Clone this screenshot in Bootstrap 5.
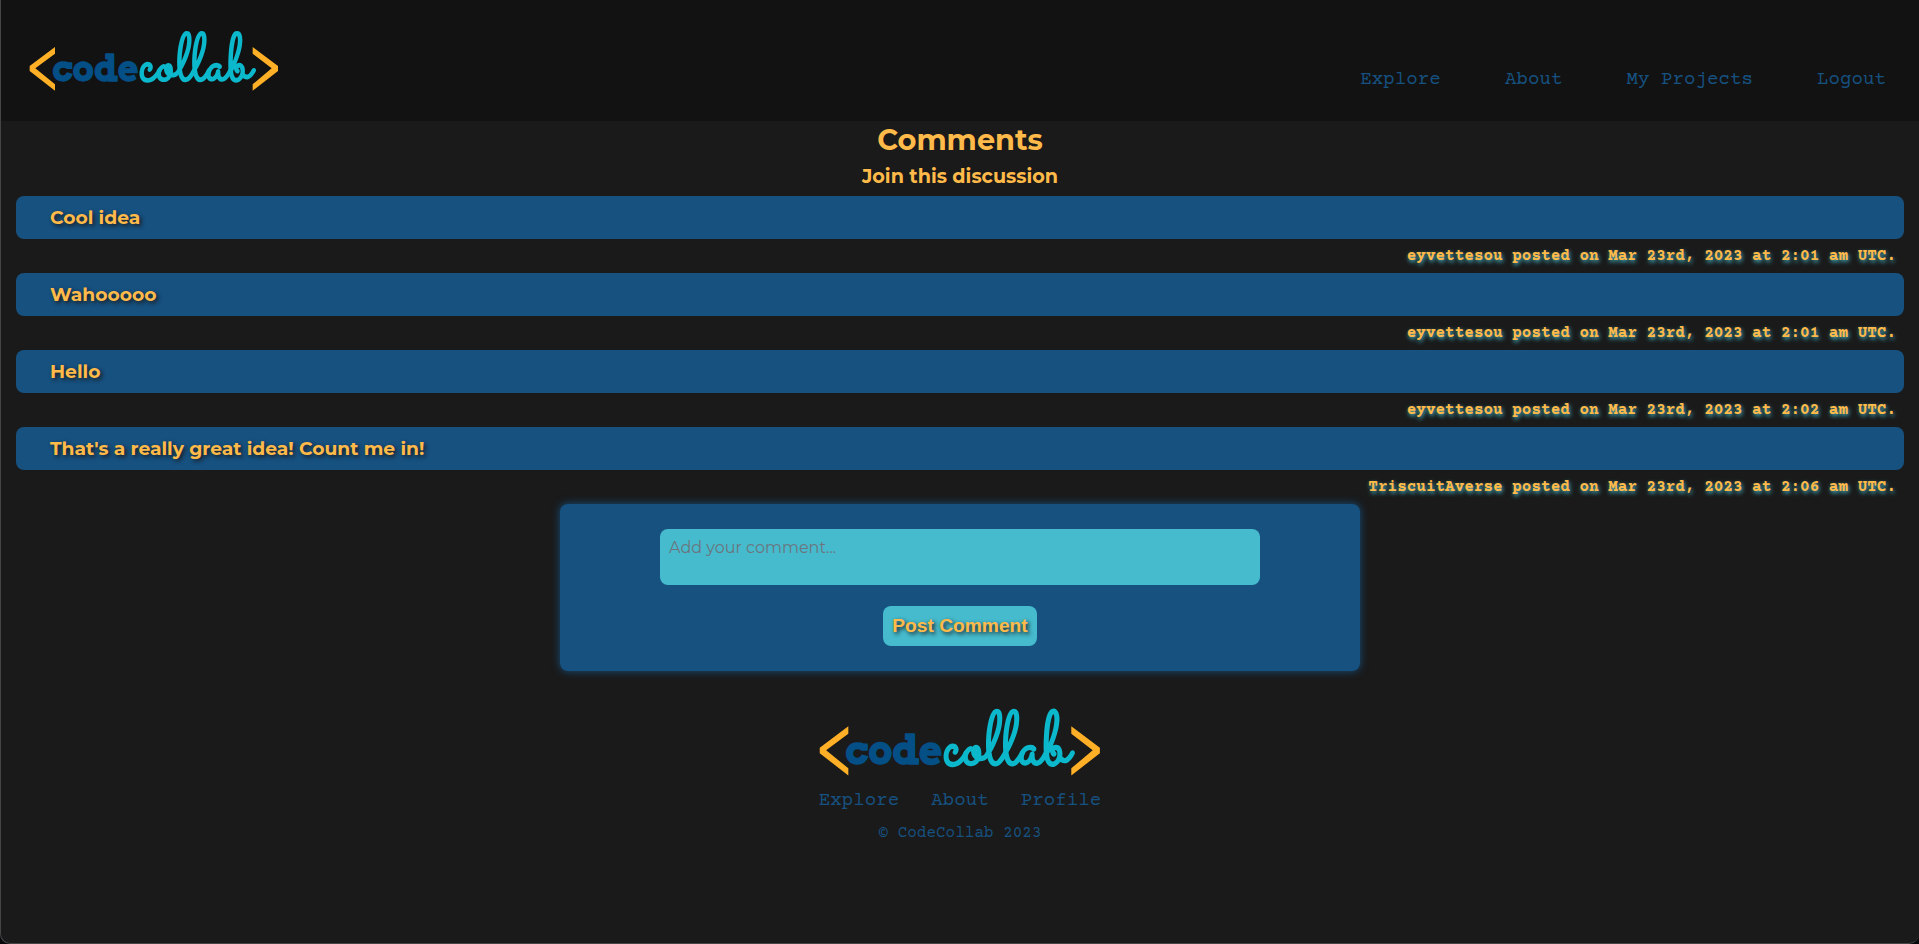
<!DOCTYPE html>
<html lang="en">
<head>
<meta charset="utf-8">
<meta name="viewport" content="width=device-width, initial-scale=1">
<title>CodeCollab</title>
<link href="https://cdn.jsdelivr.net/npm/bootstrap@5.3.0/dist/css/bootstrap.min.css" rel="stylesheet">
<style>
:root { --cc-blue:#165180; --cc-teal:#45bbcd; --cc-gold:#ffba49; --cc-dark:#1a1a1a; --cc-mono:"Courier Prime","Liberation Mono",monospace; }
html { background:#08090a; }
body { background:transparent; font-family:Montserrat,Inter,sans-serif; color:var(--cc-gold); }
.page-frame { height:944px; background:var(--cc-dark); border:solid #454545; border-width:0 0 1px 1px; border-radius:0 0 10px 10px; overflow:hidden; }
.site-head { height:121px; background:#121212; padding:30px 33px 0 28px; }
.site-link { font:19.2px/22px var(--cc-mono); color:var(--cc-blue); text-decoration:none; }
.head-links { gap:64px; padding-top:39px; }
.title-main { font-size:28.8px; font-weight:700; line-height:37px; }
.title-sub { font-size:19.2px; font-weight:700; line-height:24px; margin-top:6px; }
.comment-list { margin:8px 15px 0; }
.comment-bar { height:43px; background:var(--cc-blue); border-radius:8px; padding-left:34px; font-size:18.72px; font-weight:700; line-height:43px; text-shadow:2px 2px 4px #1a1a1a; }
.comment-meta { height:34px; padding-right:8px; font:bold 16px/35px var(--cc-mono); text-shadow:1px 2px 4px var(--cc-teal); }
.comment-form { width:800px; height:167px; background:var(--cc-blue); border-radius:8px; box-shadow:0 0 8px var(--cc-blue); padding-top:25px; }
.comment-input { width:600px; height:56px; background:var(--cc-teal); border:0; border-radius:8px; padding:9px 9px; font-size:16px; line-height:20px; resize:none; }
.comment-input::placeholder { color:#6c757d; opacity:1; font-weight:400; }
.post-btn { width:154px; height:40px; margin-top:21px; padding:0; border:0; border-radius:8px; background:var(--cc-teal); color:var(--cc-gold); font:bold 19.2px/40px "Liberation Sans",sans-serif; text-shadow:2px 2px 4px #1a1a1a; white-space:nowrap; }
.foot-logo { margin-top:36px; }
.foot-links { gap:32px; margin-top:13px; }
.copyright { font:16px/20px var(--cc-mono); color:var(--cc-blue); margin-top:11px; }
.logo-code { font:bold 106px "Arvo","Zilla Slab","Roboto Slab","DejaVu Serif",serif; fill:#044f86; stroke:#044f86; stroke-width:4; stroke-linejoin:round; }
.logo-script { font:202px "Sacramento","Pacifico","Dancing Script","Liberation Serif",cursive; fill:#0bb8cc; stroke:#0bb8cc; stroke-width:7; stroke-linejoin:round; }
</style>
</head>
<body>
<div class="page-frame">
  <header class="site-head d-flex justify-content-between align-items-start">
    <svg class="overflow-visible" width="250" height="62" viewBox="88 90 750 186" role="img" aria-label="codecollab">
      <g id="logo">
        <path fill="#ffb026" d="M166 141v20l-59 44 59 48v19L90 213v-15zM759 141v20l57 44-57 48v19l76-59v-15z"/>
        <text class="logo-code" x="158" y="242" textLength="258" lengthAdjust="spacingAndGlyphs">code</text>
        <text class="logo-script" transform="translate(418 241) skewX(-3)" textLength="336" lengthAdjust="spacingAndGlyphs">collab</text>
      </g>
    </svg>
    <nav class="head-links d-flex">
      <a class="site-link" href="#">Explore</a>
      <a class="site-link" href="#">About</a>
      <a class="site-link" href="#">My Projects</a>
      <a class="site-link" href="#">Logout</a>
    </nav>
  </header>
  <main>
    <h1 class="title-main text-center mb-0">Comments</h1>
    <h2 class="title-sub text-center mb-0">Join this discussion</h2>
    <section class="comment-list">
      <div class="comment-bar">Cool idea</div>
      <div class="comment-meta text-end">eyvettesou posted on Mar 23rd, 2023 at 2:01 am UTC.</div>
      <div class="comment-bar">Wahooooo</div>
      <div class="comment-meta text-end">eyvettesou posted on Mar 23rd, 2023 at 2:01 am UTC.</div>
      <div class="comment-bar">Hello</div>
      <div class="comment-meta text-end">eyvettesou posted on Mar 23rd, 2023 at 2:02 am UTC.</div>
      <div class="comment-bar">That's a really great idea! Count me in!</div>
      <div class="comment-meta text-end">TriscuitAverse posted on Mar 23rd, 2023 at 2:06 am UTC.</div>
    </section>
    <form class="comment-form d-flex flex-column align-items-center mx-auto">
      <textarea class="comment-input" placeholder="Add your comment..."></textarea>
      <button class="post-btn" type="button">Post Comment</button>
    </form>
  </main>
  <footer class="d-flex flex-column align-items-center">
    <svg class="foot-logo overflow-visible" width="282" height="70" viewBox="88 90 750 186" role="img" aria-label="codecollab"><use href="#logo"/></svg>
    <nav class="foot-links d-flex">
      <a class="site-link" href="#">Explore</a>
      <a class="site-link" href="#">About</a>
      <a class="site-link" href="#">Profile</a>
    </nav>
    <div class="copyright">© CodeCollab 2023</div>
  </footer>
</div>
<script src="https://cdn.jsdelivr.net/npm/bootstrap@5.3.0/dist/js/bootstrap.bundle.min.js"></script>
</body>
</html>
